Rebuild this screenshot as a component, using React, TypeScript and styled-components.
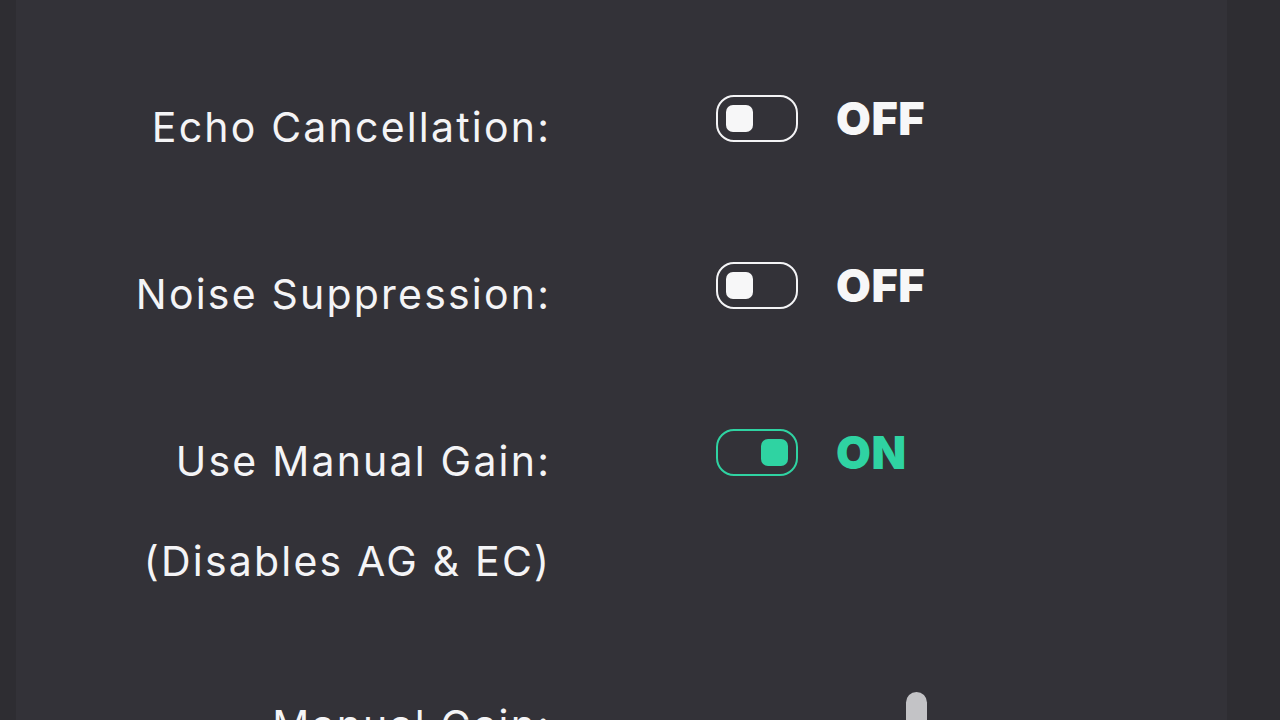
import React from "react";
import styled, { createGlobalStyle } from "styled-components";

const Global = createGlobalStyle`
  html, body {
    margin: 0;
    padding: 0;
    background: #2e2d32;
    overflow: hidden;
  }
  body {
    font-family: Inter, "Noto Sans", "Liberation Sans", sans-serif;
  }
`;

const Page = styled.div`
  width: 1280px;
  height: 720px;
  display: flex;
  background: #2e2d32;
  overflow: hidden;
`;

const Panel = styled.div`
  margin-left: 16px;
  width: 1211px;
  height: 720px;
  background: #333238;
  padding-top: 95px;
  box-sizing: border-box;
  display: flex;
  flex-direction: column;
`;

const Row = styled.div<{ $height: number }>`
  display: grid;
  grid-template-columns: 533px 1fr;
  column-gap: 167px;
  align-items: start;
  height: ${(p) => p.$height}px;
  flex-shrink: 0;
`;

const Label = styled.div<{ $top?: number }>`
  margin-top: ${(p) => p.$top ?? 8}px;
  margin-right: -2.2px;
  text-align: right;
  color: #f4f4f6;
  font-size: 41px;
  letter-spacing: 2.2px;
  line-height: 48px;
  font-weight: 400;
  white-space: nowrap;
`;

const SubLine = styled.div`
  margin-top: 52px;
`;

const Control = styled.div`
  display: flex;
  align-items: center;
  gap: 38px;
`;

const Track = styled.div<{ $on: boolean }>`
  width: 82px;
  height: 47px;
  box-sizing: border-box;
  border: 2px solid ${(p) => (p.$on ? "#2fd3a2" : "#f4f4f6")};
  border-radius: 18px;
  padding: 0 8px;
  display: flex;
  align-items: center;
  justify-content: ${(p) => (p.$on ? "flex-end" : "flex-start")};
`;

const Knob = styled.div<{ $on: boolean }>`
  width: 27px;
  height: 27px;
  border-radius: 7px;
  background: ${(p) => (p.$on ? "#2fd3a2" : "#f7f7f8")};
`;

const State = styled.span<{ $on: boolean }>`
  font-size: 45px;
  line-height: 47px;
  font-weight: 900;
  letter-spacing: 0.5px;
  color: ${(p) => (p.$on ? "#2fd3a2" : "#f7f7f8")};
`;

const SliderBox = styled.div`
  position: relative;
  margin-top: 4px;
  width: 420px;
  height: 60px;
`;

const Thumb = styled.div`
  position: absolute;
  left: 190px;
  top: 0;
  width: 21px;
  height: 44px;
  border-radius: 11px;
  background: #c3c3c6;
`;

function Toggle({ on }: { on: boolean }) {
  return (
    <Control>
      <Track $on={on}>
        <Knob $on={on} />
      </Track>
      <State $on={on}>{on ? "ON" : "OFF"}</State>
    </Control>
  );
}

export default function App() {
  return (
    <Page>
      <Global />
      <Panel>
        <Row $height={167}>
          <Label>Echo Cancellation:</Label>
          <Toggle on={false} />
        </Row>
        <Row $height={167}>
          <Label>Noise Suppression:</Label>
          <Toggle on={false} />
        </Row>
        <Row $height={259}>
          <Label>
            Use Manual Gain:
            <SubLine>(Disables AG &amp; EC)</SubLine>
          </Label>
          <Toggle on={true} />
        </Row>
        <Row $height={120}>
          <Label $top={13}>Manual Gain:</Label>
          <SliderBox>
            <Thumb />
          </SliderBox>
        </Row>
      </Panel>
    </Page>
  );
}
